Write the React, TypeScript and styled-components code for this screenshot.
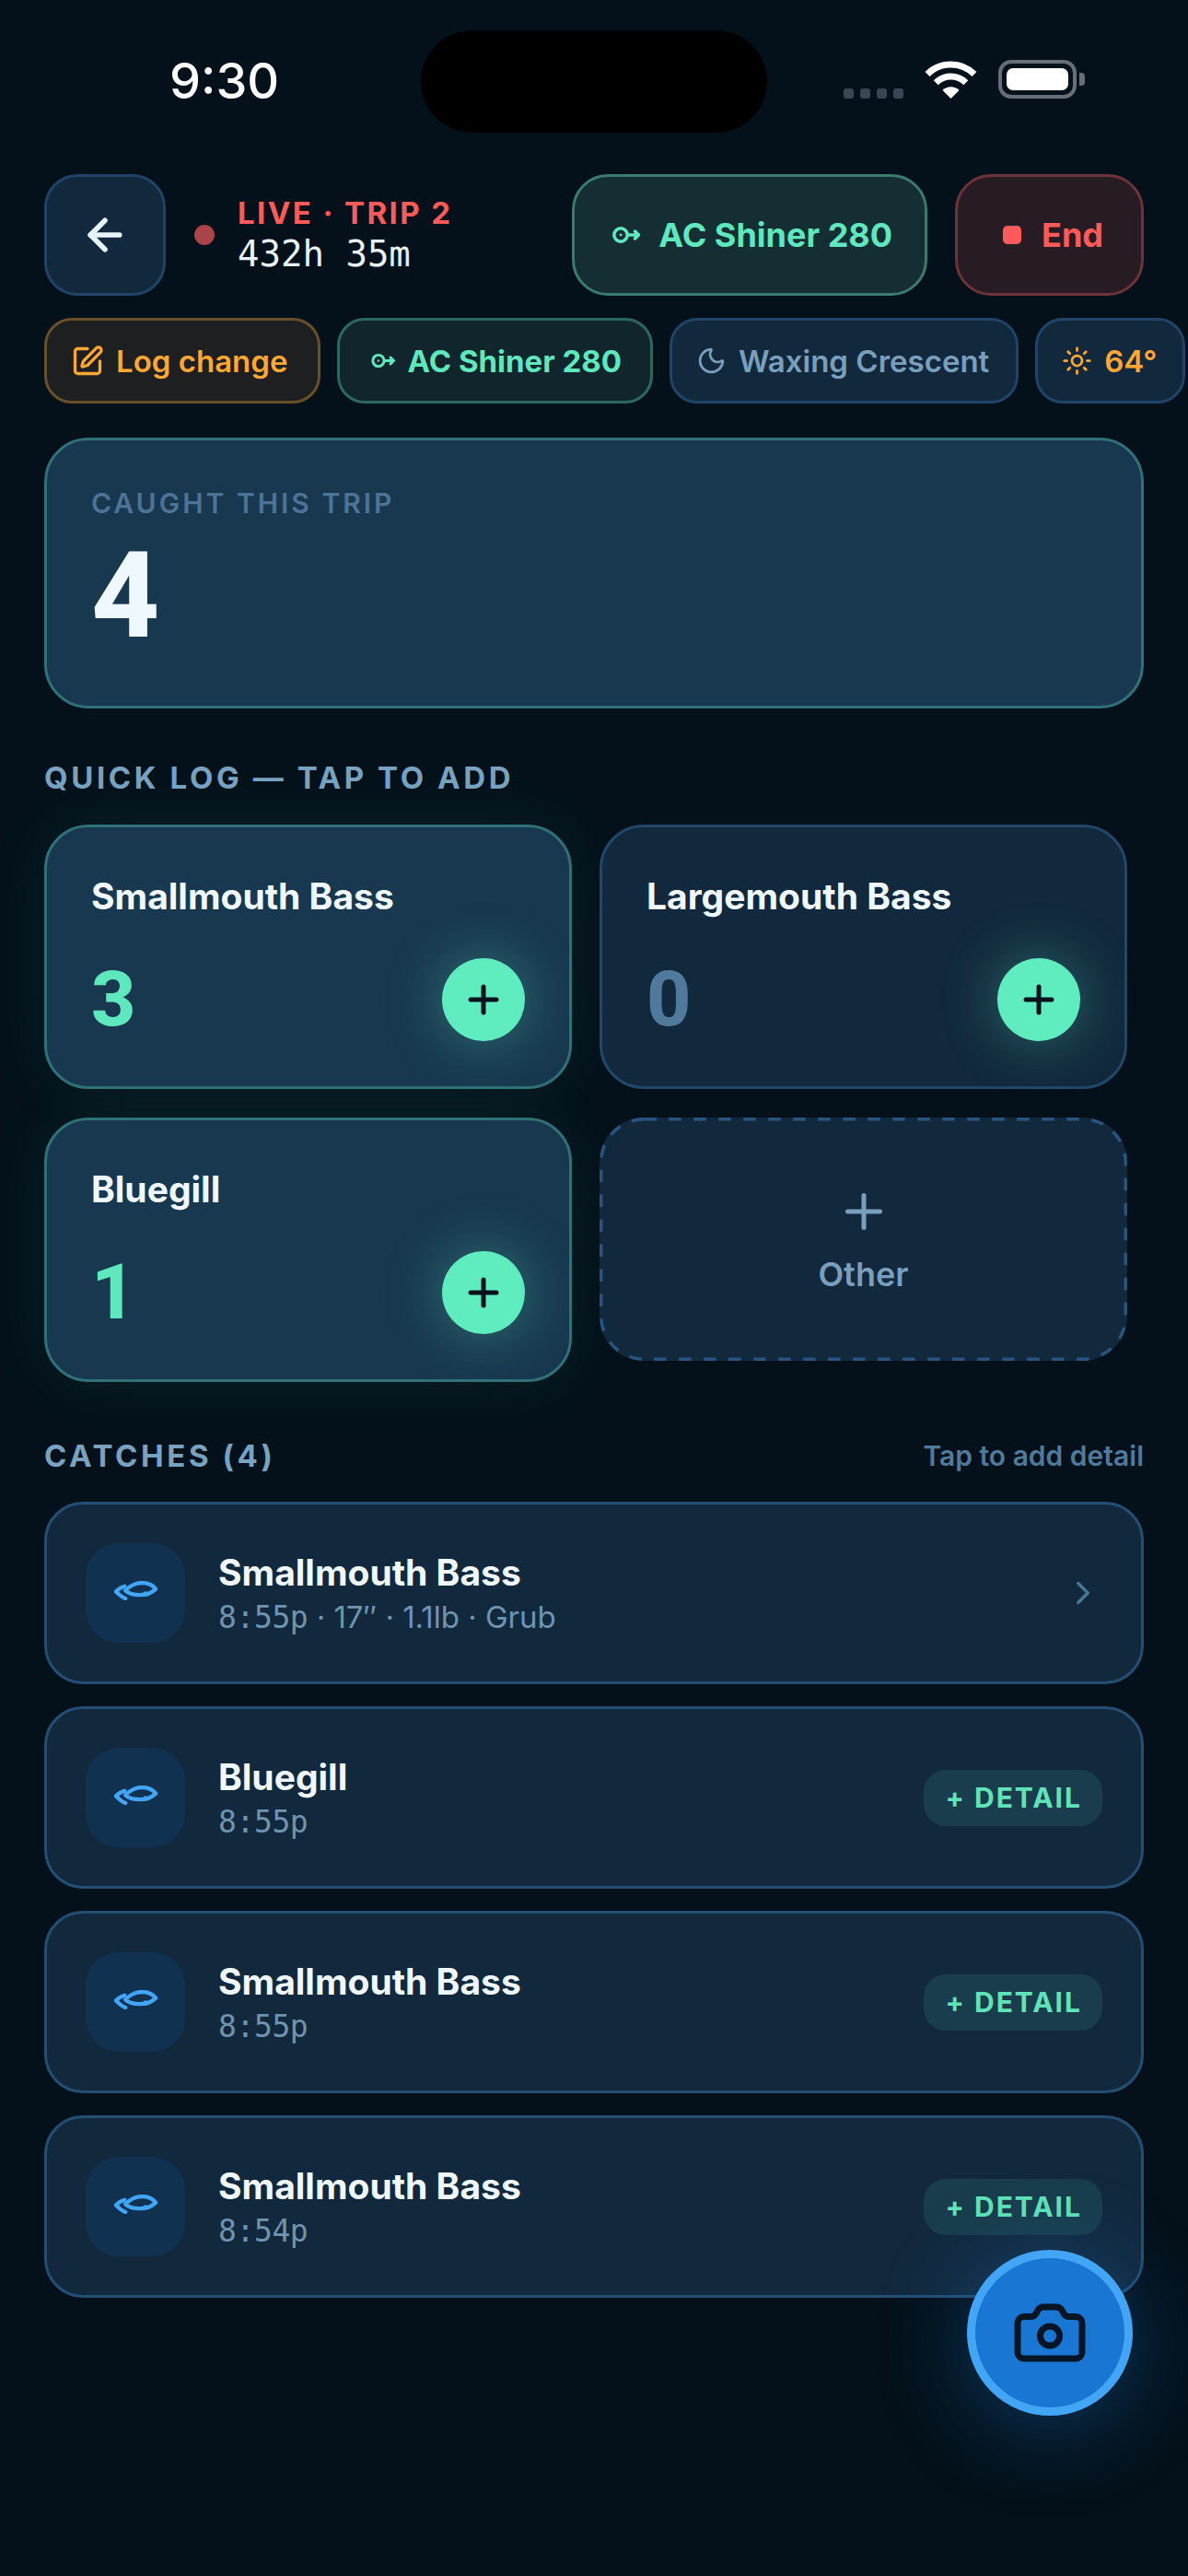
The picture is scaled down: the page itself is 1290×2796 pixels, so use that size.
import React from "react";
import styled, { createGlobalStyle } from "styled-components";
import { ArrowLeft, Camera, ChevronRight, Moon, Plus, SquarePen, Sun } from "lucide-react";

const Global = createGlobalStyle`
  html, body { margin: 0; padding: 0; background: #04111a; }
  body { font-family: Inter, "Noto Sans", sans-serif; -webkit-font-smoothing: antialiased; }
  * { box-sizing: border-box; }
`;

const mono = `"DejaVu Sans Mono", "Liberation Mono", monospace`;

const Page = styled.div`
  position: relative;
  width: 1290px;
  height: 2796px;
  overflow: hidden;
  background: #04111a;
  color: #f0f8ff;
`;

const StatusBar = styled.div`
  display: grid;
  grid-template-columns: 457px 376px 1fr;
  height: 189px;
  padding-top: 33px;
`;
const Clock = styled.div`
  padding: 22px 0 0 184px;
  font-size: 54px;
  line-height: 66px;
  font-weight: 500;
  color: #fff;
`;
const Island = styled.div`
  height: 111px;
  border-radius: 56px;
  background: #000;
`;
const StatusIcons = styled.div`
  display: flex;
  align-items: flex-start;
  padding: 32px 0 0 83px;
`;
const Signal = styled.div`
  display: flex;
  gap: 7px;
  margin: 31px 23px 0 0;
`;
const SignalDot = styled.span`
  width: 11px;
  height: 11px;
  border-radius: 3px;
  background: #3a4651;
`;
const WifiIcon = styled.svg`
  width: 57px;
  height: 42px;
  margin-right: 23px;
`;
const Battery = styled.div`
  width: 85px;
  height: 42px;
  padding: 5px;
  border: 4px solid #666f77;
  border-radius: 14px;
`;
const BatteryFill = styled.div`
  height: 100%;
  border-radius: 7px;
  background: #fff;
`;
const BatteryNub = styled.div`
  width: 6px;
  height: 14px;
  margin: 14px 0 0 3px;
  border-radius: 0 4px 4px 0;
  background: #666f77;
`;

const Header = styled.div`
  display: flex;
  align-items: center;
  gap: 30px;
  height: 132px;
  padding: 0 48px;
`;
const BackButton = styled.div`
  display: flex;
  flex: none;
  align-items: center;
  justify-content: center;
  width: 132px;
  height: 132px;
  border: 3px solid #1f4468;
  border-radius: 36px;
  background: #12293d;
  color: #e8f2fa;
`;
const LiveGroup = styled.div`
  display: flex;
  flex: 1;
  align-items: center;
  gap: 25px;
  padding-left: 1px;
`;
const LiveDot = styled.span`
  width: 22px;
  height: 22px;
  border-radius: 50%;
  background: #a94449;
`;
const LiveStack = styled.div`
  display: flex;
  flex-direction: column;
`;
const LiveLabel = styled.div`
  font-size: 33px;
  line-height: 42px;
  font-weight: 700;
  letter-spacing: 2.4px;
  color: #ff5a5a;
`;
const LiveTime = styled.div`
  font-family: ${mono};
  font-size: 39px;
  line-height: 48px;
  font-weight: 400;
  color: #e8f2fa;
`;

const ActionButton = styled.div<{ $tone: "teal" | "red" }>`
  display: flex;
  flex: none;
  align-items: center;
  gap: ${(p) => (p.$tone === "teal" ? 20 : 22)}px;
  height: 132px;
  padding: 0 ${(p) => (p.$tone === "teal" ? "35px 0 41px" : "41px 0 49px")};
  border: 3px solid ${(p) => (p.$tone === "teal" ? "#3a7b6e" : "#6e3338")};
  border-radius: 39px;
  background: ${(p) => (p.$tone === "teal" ? "#142e33" : "#281c24")};
  color: ${(p) => (p.$tone === "teal" ? "#5fe8bd" : "#ff5a5a")};
  font-size: 36px;
  font-weight: 700;
  white-space: nowrap;
`;
const StopSquare = styled.span`
  width: 20px;
  height: 20px;
  border-radius: 5px;
  background: #ff5a5a;
`;

const ChipRow = styled.div`
  display: flex;
  gap: 18px;
  margin-top: 24px;
  padding-left: 48px;
`;
const chipTones = {
  amber: { bg: "#1e1f20", line: "#6a4f2b", ink: "#ffa733" },
  teal: { bg: "#10252c", line: "#2c685e", ink: "#5fe8bd" },
  slate: { bg: "#12293d", line: "#1f4468", ink: "#7a9fbd" },
  warm: { bg: "#12293d", line: "#1f4468", ink: "#ffa733" },
};
const Chip = styled.div<{ $tone: keyof typeof chipTones; $lead?: number; $trail?: number }>`
  display: flex;
  flex: none;
  align-items: center;
  gap: 13px;
  height: 93px;
  padding: 0 ${(p) => p.$trail ?? 31}px 0 ${(p) => p.$lead ?? 26}px;
  border: 3px solid ${(p) => chipTones[p.$tone].line};
  border-radius: 30px;
  background: ${(p) => chipTones[p.$tone].bg};
  color: ${(p) => chipTones[p.$tone].ink};
  font-size: 33px;
  font-weight: 600;
  white-space: nowrap;
`;
const ChipIcon = styled.span<{ $dim?: boolean }>`
  display: flex;
  color: ${(p) => (p.$dim ? "#7a9fbd" : "inherit")};
`;
const ChipText = styled.span<{ $bold?: boolean }>`
  font-weight: ${(p) => (p.$bold ? 700 : 600)};
`;

const Hero = styled.div`
  height: 294px;
  margin: 37px 48px 0;
  padding: 48px 48px 0;
  border: 3px solid #2f7177;
  border-radius: 48px;
  background: #18384f;
`;
const HeroLabel = styled.div`
  font-size: 30px;
  line-height: 40px;
  font-weight: 600;
  letter-spacing: 3px;
  color: #4d7396;
`;
const HeroCount = styled.div`
  margin-top: 18px;
  font-family: Roboto, Inter, sans-serif;
  font-size: 129px;
  line-height: 126px;
  font-weight: 800;
  color: #f0f8ff;
`;

const SectionLabel = styled.div`
  font-size: 33px;
  line-height: 40px;
  font-weight: 700;
  letter-spacing: 3.6px;
  color: #78a2c0;
`;
const QuickLabel = styled(SectionLabel)`
  margin: 55px 48px 0;
`;

const Grid = styled.div`
  display: grid;
  grid-template-columns: 573px 573px;
  align-items: start;
  gap: 31px 30px;
  margin: 31px 0 0 48px;
`;
const SpeciesCard = styled.div<{ $active: boolean }>`
  display: flex;
  flex-direction: column;
  height: 287px;
  padding: 51px 48px 0;
  border: 3px solid ${(p) => (p.$active ? "#2f7177" : "#214869")};
  border-radius: 48px;
  background: ${(p) => (p.$active ? "#18384f" : "#12293d")};
  box-shadow: ${(p) => (p.$active ? "0 0 72px rgba(95, 237, 192, 0.07)" : "none")};
`;
const SpeciesName = styled.div`
  font-size: 39px;
  line-height: 48px;
  font-weight: 700;
  color: #f0f8ff;
`;
const SpeciesRow = styled.div`
  display: flex;
  align-items: center;
  justify-content: space-between;
  margin-top: 43px;
`;
const SpeciesCount = styled.div<{ $active: boolean }>`
  font-family: Roboto, Inter, sans-serif;
  font-size: 84px;
  line-height: 90px;
  font-weight: 800;
  color: ${(p) => (p.$active ? "#5fe8bd" : "#4f7a9c")};
`;
const AddButton = styled.div`
  display: flex;
  align-items: center;
  justify-content: center;
  width: 90px;
  height: 90px;
  border-radius: 50%;
  background: #5fedc0;
  color: #06131c;
  box-shadow: 0 0 60px rgba(95, 237, 192, 0.35);
`;
const OtherCard = styled.div`
  position: relative;
  display: flex;
  flex-direction: column;
  align-items: center;
  justify-content: center;
  height: 264px;
  border-radius: 48px;
  background: #12293d;
  color: #7a9fbd;
`;
const DashFrame = styled.svg`
  position: absolute;
  inset: 0;
  width: 100%;
  height: 100%;
`;
const OtherLabel = styled.div`
  margin-top: 16px;
  font-size: 36px;
  line-height: 44px;
  font-weight: 600;
`;

const CatchHead = styled.div`
  display: flex;
  align-items: center;
  justify-content: space-between;
  margin: 60px 48px 0;
`;
const CatchHint = styled.div`
  font-size: 30px;
  line-height: 40px;
  font-weight: 600;
  color: #4f7a9c;
`;
const CatchList = styled.div`
  display: flex;
  flex-direction: column;
  gap: 24px;
  margin: 30px 48px 0;
`;
const CatchRow = styled.div`
  display: flex;
  align-items: center;
  gap: 36px;
  height: 198px;
  padding: 0 42px;
  border: 3px solid #244e74;
  border-radius: 42px;
  background: #12293d;
`;
const FishBox = styled.div`
  display: flex;
  flex: none;
  align-items: center;
  justify-content: center;
  width: 108px;
  height: 108px;
  padding-bottom: 5px;
  border-radius: 36px;
  background: #113150;
`;
const CatchBody = styled.div`
  flex: 1;
  padding-top: 5px;
`;
const CatchName = styled.div`
  font-size: 39px;
  line-height: 48px;
  font-weight: 700;
  color: #f0f8ff;
`;
const CatchMeta = styled.div`
  font-size: 33px;
  line-height: 48px;
  font-weight: 400;
  color: #6f94b2;
`;
const CatchTime = styled.span`
  font-family: ${mono};
  letter-spacing: -0.4px;
`;
const DetailButton = styled.div`
  display: flex;
  align-items: center;
  height: 61px;
  padding: 0 22px 0 24px;
  border-radius: 24px;
  background: #193d4c;
  color: #5fe3b8;
  font-size: 30px;
  font-weight: 700;
  letter-spacing: 2px;
  white-space: nowrap;
`;
const RowChevron = styled.div`
  display: flex;
  color: #4a7596;
`;

const Fab = styled.div`
  position: absolute;
  left: 1050px;
  top: 2442px;
  display: flex;
  align-items: center;
  justify-content: center;
  width: 180px;
  height: 180px;
  border: 9px solid #42a5f5;
  border-radius: 50%;
  background: #1976d2;
  color: #061523;
  box-shadow: 0 12px 96px rgba(25, 118, 210, 0.4);
`;

const LureIcon = ({ w, h }: { w: number; h: number }) => (
  <svg width={w} height={h} viewBox="0 0 30 20" fill="none" stroke="currentColor" strokeWidth="3.5" strokeLinecap="round" strokeLinejoin="round">
    <circle cx="9" cy="10" r="7.2" />
    <circle cx="9" cy="10" r="1.4" fill="currentColor" stroke="none" />
    <path d="M17 10h11M24.5 6 28.5 10 24.5 14" />
  </svg>
);

const FishIcon = () => (
  <svg width="47" height="21" viewBox="0 0 50 22" fill="none" stroke="#42a5f5" strokeWidth="4.6" strokeLinecap="round" strokeLinejoin="round">
    <path d="M13 11C18 5 26 2 32 2C39 2 45 5 48 9C44 13 37 16 30 16C24 16 17 15 13 11Z" />
    <path d="M12 6C8 7 4 10 2 12C5 15 8 18 13 20" />
    <path d="M36 14v1" />
  </svg>
);

const species = [
  { name: "Smallmouth Bass", count: 3 },
  { name: "Largemouth Bass", count: 0 },
  { name: "Bluegill", count: 1 },
];

const catches = [
  { name: "Smallmouth Bass", time: "8:55p", rest: " · 17″ · 1.1lb · Grub", logged: true },
  { name: "Bluegill", time: "8:55p", rest: "", logged: false },
  { name: "Smallmouth Bass", time: "8:55p", rest: "", logged: false },
  { name: "Smallmouth Bass", time: "8:54p", rest: "", logged: false },
];

export default function App() {
  return (
    <Page>
      <Global />
      <StatusBar>
        <Clock>9:30</Clock>
        <Island />
        <StatusIcons>
          <Signal>
            {[0, 1, 2, 3].map((i) => (
              <SignalDot key={i} />
            ))}
          </Signal>
          <WifiIcon viewBox="0 0 57 42" fill="none">
            <path d="M3 15.5A36 36 0 0 1 54 15.5" stroke="#fff" strokeWidth="7" />
            <path d="M12.2 24.7A23 23 0 0 1 44.8 24.7" stroke="#fff" strokeWidth="7" />
            <path d="M28.5 42 19.5 33A12.7 12.7 0 0 1 37.5 33Z" fill="#fff" />
          </WifiIcon>
          <Battery>
            <BatteryFill />
          </Battery>
          <BatteryNub />
        </StatusIcons>
      </StatusBar>

      <Header>
        <BackButton>
          <ArrowLeft size={54} strokeWidth={2.5} />
        </BackButton>
        <LiveGroup>
          <LiveDot />
          <LiveStack>
            <LiveLabel>LIVE · TRIP 2</LiveLabel>
            <LiveTime>432h 35m</LiveTime>
          </LiveStack>
        </LiveGroup>
        <ActionButton $tone="teal">
          <LureIcon w={30} h={20} />
          AC Shiner 280
        </ActionButton>
        <ActionButton $tone="red">
          <StopSquare />
          End
        </ActionButton>
      </Header>

      <ChipRow>
        <Chip $tone="amber" $trail={33}>
          <ChipIcon>
            <SquarePen size={36} strokeWidth={2.2} />
          </ChipIcon>
          <ChipText>Log change</ChipText>
        </Chip>
        <Chip $tone="teal" $lead={34}>
          <ChipIcon>
            <LureIcon w={26} h={17} />
          </ChipIcon>
          <ChipText $bold>AC Shiner 280</ChipText>
        </Chip>
        <Chip $tone="slate" $trail={29}>
          <ChipIcon $dim>
            <Moon size={33} strokeWidth={2} />
          </ChipIcon>
          <ChipText>Waxing Crescent</ChipText>
        </Chip>
        <Chip $tone="warm" $trail={28}>
          <ChipIcon>
            <Sun size={33} strokeWidth={2} />
          </ChipIcon>
          <ChipText>64°</ChipText>
        </Chip>
      </ChipRow>

      <Hero>
        <HeroLabel>CAUGHT THIS TRIP</HeroLabel>
        <HeroCount>4</HeroCount>
      </Hero>

      <QuickLabel>QUICK LOG — TAP TO ADD</QuickLabel>
      <Grid>
        {species.map((s) => (
          <SpeciesCard key={s.name} $active={s.count > 0}>
            <SpeciesName>{s.name}</SpeciesName>
            <SpeciesRow>
              <SpeciesCount $active={s.count > 0}>{s.count}</SpeciesCount>
              <AddButton>
                <Plus size={48} strokeWidth={2.5} />
              </AddButton>
            </SpeciesRow>
          </SpeciesCard>
        ))}
        <OtherCard>
          <DashFrame fill="none">
            <rect x="1.75" y="1.75" width="569.5" height="260.5" rx="46.5" stroke="#285480" strokeWidth="3.5" strokeDasharray="13.5 13.5" />
          </DashFrame>
          <Plus size={60} strokeWidth={2} />
          <OtherLabel>Other</OtherLabel>
        </OtherCard>
      </Grid>

      <CatchHead>
        <SectionLabel>CATCHES (4)</SectionLabel>
        <CatchHint>Tap to add detail</CatchHint>
      </CatchHead>
      <CatchList>
        {catches.map((c, i) => (
          <CatchRow key={i}>
            <FishBox>
              <FishIcon />
            </FishBox>
            <CatchBody>
              <CatchName>{c.name}</CatchName>
              <CatchMeta>
                <CatchTime>{c.time}</CatchTime>
                {c.rest}
              </CatchMeta>
            </CatchBody>
            {c.logged ? (
              <RowChevron>
                <ChevronRight size={42} strokeWidth={2} />
              </RowChevron>
            ) : (
              <DetailButton>+ DETAIL</DetailButton>
            )}
          </CatchRow>
        ))}
      </CatchList>

      <Fab>
        <Camera size={84} strokeWidth={2} />
      </Fab>
    </Page>
  );
}
